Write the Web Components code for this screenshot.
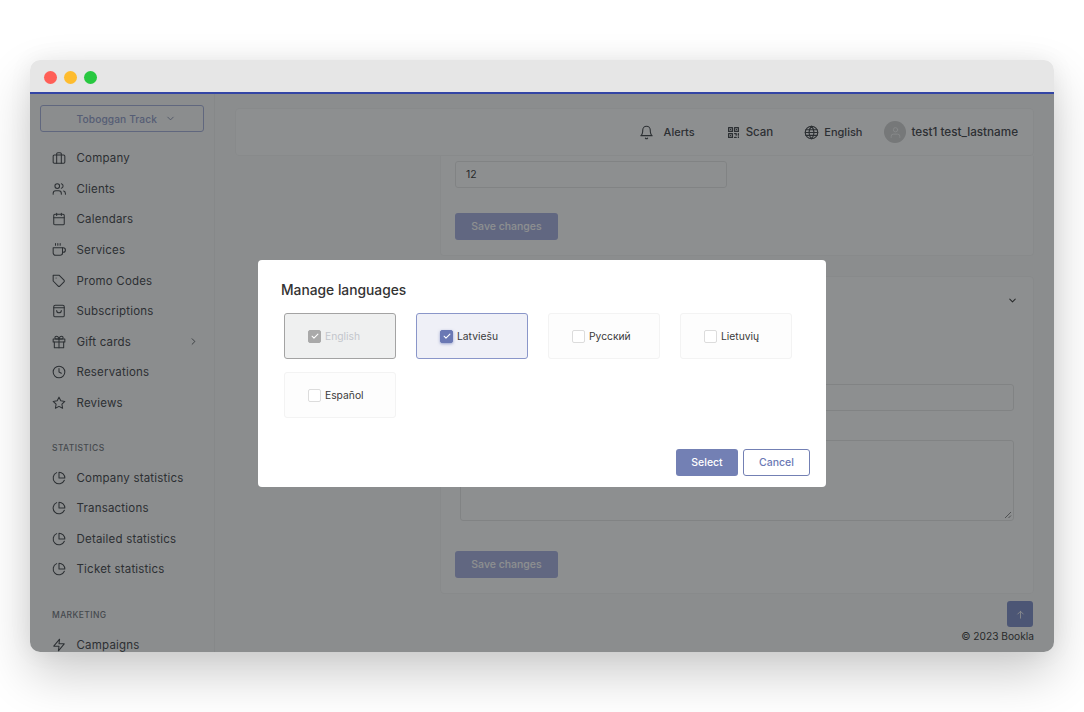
<!DOCTYPE html>
<html lang="en">
<head>
<meta charset="utf-8">
<title>Manage languages</title>
<style>
  html, body { margin: 0; height: 100%; background: #fff; }
  body { font-family: Inter, "Liberation Sans", sans-serif; color: #333; overflow: hidden; }
</style>
</head>
<body>
<app-window>
  <side-nav slot="side"></side-nav>
  <top-bar slot="main"></top-bar>
  <settings-form slot="main"></settings-form>
  <lang-dialog slot="modal"></lang-dialog>
</app-window>

<script>
// feather style icon paths, all on a 24 box
const ICONS = {
  company: '<rect x="2" y="7" width="20" height="14" rx="2"/><path d="M16 21V5a2 2 0 0 0-2-2h-4a2 2 0 0 0-2 2v16"/>',
  clients: '<path d="M16 21v-1.500a4.500 4.500 0 0 0-4.500-4.500h-5A4.500 4.500 0 0 0 2 19.500V21"/><circle cx="9" cy="7" r="4"/><path d="M23 21v-1.500a4.500 4.500 0 0 0-3-4.200"/><path d="M16 3.100a4 4 0 0 1 0 7.750"/>',
  calendar: '<rect x="3" y="4" width="18" height="18" rx="2"/><path d="M16 2v4M8 2v4M3 10h18"/>',
  coffee: '<path d="M18 8h1a4 4 0 0 1 0 8h-1"/><path d="M2 8h16v9a4 4 0 0 1-4 4H6a4 4 0 0 1-4-4V8z"/><path d="M6 1v3M10 1v3M14 1v3"/>',
  tag: '<path d="M20.600 13.400l-7.200 7.200a2 2 0 0 1-2.800 0L2 12V2h10l8.600 8.600a2 2 0 0 1 0 2.800z"/><path d="M7 7h.01"/>',
  bag: '<rect x="3" y="2" width="18" height="20" rx="2.500"/><path d="M3 6.500h18"/><path d="M8 11a4 4 0 0 0 8 0"/>',
  gift: '<path d="M20 12v10H4V12"/><rect x="2" y="7" width="20" height="5"/><path d="M12 22V7"/><path d="M12 7H7.500a2.500 2.500 0 0 1 0-5C11 2 12 7 12 7z"/><path d="M12 7h4.500a2.500 2.500 0 0 0 0-5C13 2 12 7 12 7z"/>',
  clock: '<circle cx="12" cy="12" r="10"/><path d="M12 6v6l4 2"/>',
  star: '<path d="M12 2l3.090 6.260L22 9.270l-5 4.870 1.180 6.880L12 17.770l-6.180 3.250L7 14.140 2 9.270l6.910-1.010L12 2z"/>',
  pie: '<path d="M21.200 15.900A10 10 0 1 1 8 2.800"/><path d="M22 12A10 10 0 0 0 12 2v10z"/>',
  zap: '<path d="M13 2L3 14h9l-1 8 10-12h-9l1-8z"/>',
  bell: '<path d="M18 8A6 6 0 0 0 6 8c0 7-3 9-3 9h18s-3-2-3-9"/><path d="M13.730 21a2 2 0 0 1-3.460 0"/>',
  globe: '<circle cx="12" cy="12" r="10"/><path d="M2 12h20"/><path d="M2.900 7.500h18.200M2.900 16.500h18.200"/><path d="M12 2a15.300 15.300 0 0 1 4 10 15.300 15.300 0 0 1-4 10 15.300 15.300 0 0 1-4-10 15.300 15.300 0 0 1 4-10z"/>',
  qr: '<path d="M3 3h7v7H3zM14 3h7v7h-7zM3 14h7v7H3zM6.500 6.500h.01M17.500 6.500h.01M6.500 17.500h.01M14 14h3v3M21 14v3M14 21h3M21 21v-1"/>',
  down: '<path d="M6 9l6 6 6-6"/>',
  right: '<path d="M9 18l6-6-6-6"/>',
  up: '<path d="M12 20V5M6 11l6-6 6 6"/>',
  user: '<path d="M20 21v-2a4 4 0 0 0-4-4H8a4 4 0 0 0-4 4v2"/><circle cx="12" cy="7" r="4"/>',
  check: '<path d="M5 12.500l4.500 4.500L19 7.500"/>'
}

class XIcon extends HTMLElement {
  connectedCallback () {
    const size = this.getAttribute('size') || 14
    const width = this.getAttribute('stroke') || 1.8
    this.attachShadow({mode: 'open'}).innerHTML = `
      <style>
        :host { display: inline-flex; flex: none; }
        svg { display: block; fill: none; stroke: currentColor; stroke-linecap: round; stroke-linejoin: round; }
      </style>
      <svg width="${size}" height="${size}" viewBox="0 0 24 24" stroke-width="${width}">${ICONS[this.getAttribute('name')]}</svg>`
  }
}
customElements.define('x-icon', XIcon)

class AppWindow extends HTMLElement {
  constructor () {
    super()
    this.attachShadow({mode: 'open'}).innerHTML = `
      <style>
        :host { display: block; width: 1024px; height: 592px; margin: 60px 30px 0; }
        .win {
          position: relative; height: 100%; border-radius: 10px; overflow: hidden;
          display: flex; flex-direction: column; background: #fbfbfb;
        }
        .shadow { border-radius: 10px; box-shadow: 0 22px 50px rgba(0,0,0,.2), 0 0 24px rgba(0,0,0,.06); height: 100%; }
        .bar {
          flex: none; background: #e6e6e6; border-bottom: 2px solid #3345a5;
          display: flex; align-items: center; gap: 7px; padding: 2px 0 0 13.500px; box-sizing: border-box; height: 34px;
        }
        .dot { width: 13px; height: 13px; border-radius: 50%; }
        .body { flex: 1; min-height: 0; display: flex; position: relative; }
        .main { flex: 1; min-width: 0; display: flex; flex-direction: column; padding: 14px 20px 0; }
        .overlay {
          position: absolute; inset: 0; background: rgba(28,31,33,.5);
          display: flex; justify-content: center; align-items: flex-start; padding-top: 166px;
        }
      </style>
      <div class="shadow"><div class="win">
        <div class="bar">
          <span class="dot" style="background:#ff5f57"></span>
          <span class="dot" style="background:#febc2e"></span>
          <span class="dot" style="background:#28c840"></span>
        </div>
        <div class="body">
          <slot name="side"></slot>
          <div class="main"><slot name="main"></slot></div>
          <div class="overlay"><slot name="modal"></slot></div>
        </div>
      </div></div>`
  }
}
customElements.define('app-window', AppWindow)

class NavItem extends HTMLElement {
  connectedCallback () {
    const more = this.hasAttribute('more')
    this.attachShadow({mode: 'open'}).innerHTML = `
      <style>
        :host { display: flex; align-items: center; height: 30.6px; padding: 0 15px 0 22px; color: #3d4045; font-size: 11.5px; letter-spacing: .2px; }
        .txt { margin-left: 10.500px; flex: 1; white-space: nowrap; }
      </style>
      <x-icon name="${this.getAttribute('icon')}" size="14"></x-icon>
      <span class="txt"><slot></slot></span>
      ${more ? '<x-icon name="right" size="11"></x-icon>' : ''}`
  }
}
customElements.define('nav-item', NavItem)

class SideNav extends HTMLElement {
  constructor () {
    super()
    const rows = (list) => list.map(([i, t, m]) => `<nav-item icon="${i}" ${m ? 'more' : ''}>${t}</nav-item>`).join('')
    this.attachShadow({mode: 'open'}).innerHTML = `
      <style>
        :host { display: block; flex: none; width: 184px; height: 100%; border-right: 1px solid #f1f1f1; overflow: hidden; }
        .place {
          margin: 11px 10px 11px 10px; height: 27px; box-sizing: border-box; border: 1px solid #a5aedb; border-radius: 3px;
          display: flex; align-items: center; justify-content: flex-end; gap: 8px; padding-right: 27px;
          color: #8f9ac8; font-size: 10.200px; font-weight: 500; letter-spacing: .1px;
        }
        .place x-icon { color: #75809f; }
        .head { font-size: 8.500px; font-weight: 500; color: #70747a; letter-spacing: .4px; padding-left: 22px; margin: 24px 0 8px; line-height: 12px; }
        .head.mark { margin-bottom: 9px; }
      </style>
      <div class="place">Toboggan Track <x-icon name="down" size="11"></x-icon></div>
      ${rows([['company','Company'],['clients','Clients'],['calendar','Calendars'],['coffee','Services'],['tag','Promo Codes'],['bag','Subscriptions'],['gift','Gift cards',1],['clock','Reservations'],['star','Reviews']])}
      <div class="head">STATISTICS</div>
      ${rows([['pie','Company statistics'],['pie','Transactions'],['pie','Detailed statistics'],['pie','Ticket statistics']])}
      <div class="head mark">MARKETING</div>
      ${rows([['zap','Campaigns']])}`
  }
}
customElements.define('side-nav', SideNav)

class TopBar extends HTMLElement {
  constructor () {
    super()
    this.attachShadow({mode: 'open'}).innerHTML = `
      <style>
        :host {
          display: flex; flex: none; height: 48px; box-sizing: border-box; align-items: center; justify-content: flex-end;
          background: #fff; border: 1px solid #f4f4f4; border-radius: 4px; padding-right: 15px;
          font-size: 11.500px; font-weight: 500; color: #3d4045; white-space: nowrap;
        }
        .it { display: flex; align-items: center; }
        .sm { font-size: 11px; }
        .name { font-size: 11.700px; }
        .avatar { width: 22px; height: 22px; border-radius: 50%; background: #d0d0d0; color: #f2f2f2; display: flex; align-items: center; justify-content: center; margin-right: 5px; }
      </style>
      <div class="it sm" style="margin-right:32px"><x-icon name="bell" size="15" style="margin-right:10px"></x-icon>Alerts</div>
      <div class="it" style="margin-right:31px"><x-icon name="qr" size="13" stroke="2.400" style="margin-right:6px"></x-icon>Scan</div>
      <div class="it sm" style="margin-right:22px"><x-icon name="globe" size="15" style="margin-right:5px"></x-icon>English</div>
      <div class="it name"><span class="avatar"><x-icon name="user" size="13"></x-icon></span>test1 test_lastname</div>`
  }
}
customElements.define('top-bar', TopBar)

class SaveButton extends HTMLElement {
  constructor () {
    super()
    this.attachShadow({mode: 'open'}).innerHTML = `
      <style>
        :host {
          display: flex; width: 103px; height: 27px; align-items: center; justify-content: center; border-radius: 3px;
          background: #a6aee0; color: #fff; font-size: 10.500px; font-weight: 500; white-space: nowrap;
        }
      </style><slot></slot>`
  }
}
customElements.define('save-button', SaveButton)

class SettingsForm extends HTMLElement {
  constructor () {
    super()
    this.attachShadow({mode: 'open'}).innerHTML = `
      <style>
        :host { display: block; margin-left: 205px; position: relative; }
        .card { box-sizing: border-box; border: 1px solid #f4f4f4; background: #fff; border-radius: 0 0 4px 4px; }
        .first { height: 100px; border-top: 0; padding: 5px 14px 0; margin-bottom: 20px; }
        .second { height: 318px; border-radius: 4px; padding: 0 19px 0 19px; position: relative; }
        .field { box-sizing: border-box; border: 1px solid #e6e6e6; border-radius: 3px; height: 27px; }
        .num { width: 272px; display: flex; align-items: center; padding-left: 10px; font-size: 10.500px; color: #333; margin-bottom: 25px; }
        .chev { display: flex; justify-content: flex-end; padding-top: 18px; height: 89px; color: #333; }
        .chev x-icon { margin-right: -4px; }
        .area { box-sizing: border-box; height: 81px; border: 1px solid #e6e6e6; border-radius: 3px; margin-top: 29px; margin-bottom: 30px; position: relative; }
        .grip { position: absolute; right: 1px; bottom: 1px; display: block; }
        .second save-button { margin-left: -5px; }
        .up {
          position: absolute; right: 1px; top: 445px; width: 26px; height: 26px; border-radius: 3px;
          background: #7d8cc8; color: #fff; display: flex; align-items: center; justify-content: center;
        }
        .copy { position: absolute; right: 0; top: 474px; font-size: 10.200px; color: #333; white-space: nowrap; }
      </style>
      <div class="card first">
        <div class="field num">12</div>
        <save-button>Save changes</save-button>
      </div>
      <div class="card second">
        <div class="chev"><x-icon name="down" size="11" stroke="2.200"></x-icon></div>
        <div class="field"></div>
        <div class="area">
          <svg class="grip" width="8" height="8" viewBox="0 0 8 8" fill="none" stroke="#666" stroke-width=".8"><path d="M1 7l6-6M4.500 7L7 4.500"/></svg>
        </div>
        <save-button>Save changes</save-button>
      </div>
      <div class="up"><x-icon name="up" size="11"></x-icon></div>
      <div class="copy">© 2023 Bookla</div>`
  }
}
customElements.define('settings-form', SettingsForm)

class LangOption extends HTMLElement {
  connectedCallback () {
    const state = this.getAttribute('state') || ''
    this.attachShadow({mode: 'open'}).innerHTML = `
      <style>
        :host {
          display: flex; align-items: center; gap: 4px; height: 46px; box-sizing: border-box; padding-left: 23px;
          border: 1px solid #f3f3f3; border-radius: 3px; background: #fdfdfd; color: #3a3a3a; font-size: 10.300px;
        }
        .box { width: 13px; height: 13px; box-sizing: border-box; border: 1px solid #dcdcdc; border-radius: 2px; background: #fff; color: #fff; display: flex; align-items: center; justify-content: center; }
        :host([state=locked]) { background: #eff0f0; border-color: #a3a3a3; color: #c3c6cc; }
        :host([state=locked]) .box { background: #a9a9a9; border-color: #a9a9a9; }
        :host([state=on]) { background: #eff0f7; border-color: #8a96c9; }
        :host([state=on]) .box { background: #6a78b4; border-color: #6a78b4; box-shadow: 0 1px 3px rgba(63,81,163,.5); }
      </style>
      <span class="box">${state ? '<x-icon name="check" size="10" stroke="2.600"></x-icon>' : ''}</span>
      <slot></slot>`
  }
}
customElements.define('lang-option', LangOption)

class LangDialog extends HTMLElement {
  constructor () {
    super()
    this.attachShadow({mode: 'open'}).innerHTML = `
      <style>
        :host { display: block; width: 568px; height: 227px; box-sizing: border-box; background: #fff; border-radius: 4px; padding: 21px 16px 11px 26px; }
        h2 { margin: 0 0 14px -3px; font-size: 13.800px; line-height: 18px; font-weight: 500; color: #333; }
        .grid { display: grid; grid-template-columns: repeat(4, 112px); column-gap: 20px; row-gap: 13px; height: 125px; align-content: start; }
        .foot { display: flex; justify-content: flex-end; gap: 5px; margin-top: 11px; }
        .btn { height: 27px; box-sizing: border-box; border-radius: 3px; display: flex; align-items: center; justify-content: center; font-size: 10.500px; font-weight: 500; }
        .sel { width: 62px; background: #7380b4; color: #fff; }
        .can { width: 67px; border: 1px solid #7380b4; color: #6a78b4; background: #fff; }
      </style>
      <h2>Manage languages</h2>
      <div class="grid">
        <lang-option state="locked">English</lang-option>
        <lang-option state="on">Latviešu</lang-option>
        <lang-option>Русский</lang-option>
        <lang-option>Lietuvių</lang-option>
        <lang-option>Español</lang-option>
      </div>
      <div class="foot">
        <div class="btn sel">Select</div>
        <div class="btn can">Cancel</div>
      </div>`
  }
}
customElements.define('lang-dialog', LangDialog)
</script>
</body>
</html>
